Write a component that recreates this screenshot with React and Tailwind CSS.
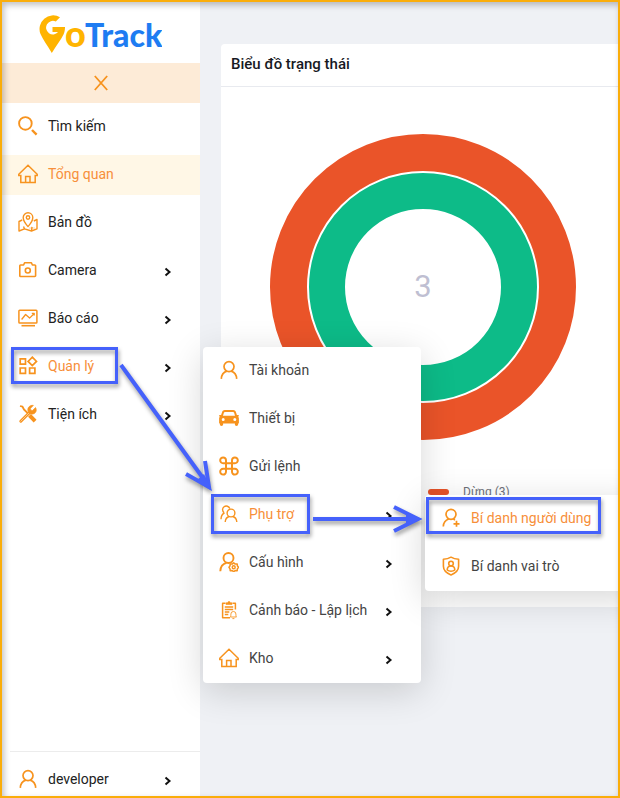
import React from "react";

const S = ({ children, sw = 1.5, className = "" }) => (
  <svg viewBox="0 0 20 20" className={"size-5 shrink-0 " + className} fill="none" stroke="#f7931e" strokeWidth={sw} strokeLinejoin="round" aria-hidden="true">
    {children}
  </svg>
);

const Search = () => <S sw={1.9}><circle cx="7.4" cy="7.4" r="6.3" /><path d="M14 14l4.600 4.600" strokeWidth="2.400" /></S>;
const Home = () => <S sw={1.5}><path d="M.8 10.3L10 1.2l9.2 9.1v1.2h-2v7.1H2.8v-7.1h-2zM7.6 18.6v-6h4.4v6" strokeLinejoin="miter" /></S>;
const MapPin = () => (
  <S sw={1.4}>
    <path d="M10 14.6S5.2 9.4 5.2 5.6a4.8 4.8 0 019.6 0c0 3.800-4.800 9-4.800 9z" />
    <circle cx="10" cy="5.500" r="1.700" />
    <path d="M4.200 8L1 9.500V19l5.500-2.200 7 2.200 5.500-2.200V7.500L15.800 9M5.500 14.500l1 2.300M14 14.800l-.5 4" />
    <path d="M11.500 16h5" strokeDasharray="1 1" strokeWidth=".8" />
  </S>
);
const Camera = () => <S sw={1.6}><path d="M2.600 5H5.600l1-2.300h6.800L14.400 5h2.400a.8.8 0 01.8.8v9.900a.8.8 0 01-.8.8H2.600a.8.8 0 01-.8-.8V5.800a.8.8 0 01.8-.8z" /><circle cx="9.800" cy="10.500" r="2.500" /></S>;
const Report = () => <S><rect x=".9" y="2.200" width="18" height="12.800" rx=".8" /><path d="M3.600 11.500l4-5 4 3.600 4.400-4.400M13.800 5.300h2.400v2.300" strokeWidth="1.300" /><path d="M3.500 17.700h13.500" strokeWidth="1.600" /></S>;
const Grid = () => <S sw={1.700}><path d="M2.200 2.800h5.300v5.300H2.200zM2.200 12h5.300v5.300H2.200zM11.600 12h5.300v5.300h-5.300zM14.300 1.200l4.200 4.200-4.200 4.200-4.200-4.200z" strokeLinejoin="miter" /></S>;
const Tools = () => (
  <S sw={1.500}>
    <path d="M2 2l2.500.7L6 5.500l5.200 5.200" strokeWidth="1.800" />
    <path d="M11.500 11.300l5.600 5.800" strokeWidth="4" strokeLinecap="butt" />
    <path d="M2.800 17.200l8-8" strokeWidth="3" strokeLinecap="round" />
    <path d="M2.500 17.500l9.300-9.300" stroke="#fff" strokeWidth=".5" />
    <path d="M17.500 3.500l-3 3-1.700-.3-.4-1.800 3-3C12 .8 9 3.600 10 7.200c.5 2.500 3.600 3.600 6 2.500 2.300-1.100 3-4 1.500-6.200z" fill="#f7931e" strokeWidth=".6" />
  </S>
);
const User = () => <S sw={1.700}><circle cx="10" cy="6.600" r="5" /><path d="M2.300 18.900c.2-4.200 2.500-6.800 5.500-7.800M17.700 18.900c-.2-4.200-2.500-6.800-5.500-7.800" /></S>;
const Car = () => (
  <S sw={0}>
    <path fill="#f7931e" fillRule="evenodd" d="M5.800 2h8.400c1.300 0 2.200.7 2.600 1.800L17.900 7h1.200c1.200 0 1 1.700 0 1.700.6.500.8 1.100.8 1.900v4.400c0 .4-.3.600-.8.600v1.200c0 1.500-3.200 1.500-3.200 0v-1.200H4.100v1.200c0 1.500-3.200 1.500-3.200 0v-1.200c-.5 0-.8-.2-.8-.6v-4.400c0-.8.2-1.400.8-1.900-1 0-1.200-1.700 0-1.700h1.200l1.100-3.200C3.600 2.700 4.500 2 5.800 2zm.2 1.900c-.6 0-.9.300-1.100.8L4 7.700h12l-.9-3c-.2-.5-.5-.8-1.100-.8zM4.200 10a1.500 1.500 0 100 3 1.500 1.500 0 000-3zm11.600 0a1.500 1.500 0 100 3 1.500 1.500 0 000-3z" />
  </S>
);
const Command = () => <S sw={2}><path d="M7 7V4.400A2.900 2.900 0 104.100 7.200h11.800A2.900 2.900 0 1013 4.400v11.200a2.900 2.900 0 102.900-2.800H4.100A2.900 2.900 0 107 15.600z" /></S>;
const Users = () => <S sw={1.400}><circle cx="12" cy="9" r="3.900" /><path d="M6.200 18c.2-3 1.800-4.900 4-5.500M17.800 18c-.2-3-1.800-4.900-4-5.500M10.800 4.600A3.700 3.700 0 105.200 8.800M2 15.200c.1-3.200 1.500-5.400 3.500-6.200" /></S>;
const UserGear = () => (
  <S sw={1.900}>
    <circle cx="9.500" cy="6" r="5" /><path d="M1.300 19.200c.2-4.700 2.700-7.500 6.200-8.300" />
    <path d="M14.700 10.800l1.500 1.300 2-.2.200 2 1.300 1.400-1.300 1.500-.2 2-2-.2-1.500 1.100-1.500-1.100-2 .2-.2-2-1-1.500 1-1.400.2-2 2 .2z" strokeWidth="1.500" /><circle cx="14.700" cy="15.300" r="1.500" strokeWidth="1.400" />
  </S>
);
const Clipboard = () => (
  <S sw={1.500}>
    <path d="M6.500 3.200H3.600v14.600H11M13.500 3.200h2.900v6.300" />
    <path d="M7 4.500V2.800h1.700a1.300 1.300 0 012.600 0H13v1.700z" fill="#f7931e" strokeWidth=".6" />
    <path d="M5.800 7h8.400M5.800 9.500h8.400M5.800 12h4.500M5.800 14.500h3.500" strokeWidth="1.300" />
    <path d="M11.300 17c.7-.6.500-1.800.6-3a2.500 2.500 0 015 0c.1 1.200-.1 2.400.6 3zM13.400 18.600h2" strokeWidth=".9" />
  </S>
);
const UserPlus = () => <S sw={1.700}><circle cx="10" cy="6.300" r="5" /><path d="M2.300 18.500c.2-4 2.500-6.600 5.500-7.500M12.300 11.100l1.700.8M15.500 12.800v6M12.500 15.800h6" /></S>;
const Shield = () => <S sw={1.600}><path d="M10 1.200c2.200 1.400 5 2 7.600 2v7c0 4-3.500 7-7.600 8.700-4.100-1.700-7.600-4.700-7.600-8.700v-7c2.600 0 5.400-.6 7.600-2z" /><circle cx="10" cy="7.500" r="2.300" /><path d="M6.200 14c0-2.500 1.500-4 3.800-4s3.800 1.500 3.800 4c-2 1.600-5.600 1.600-7.600 0z" /></S>;

const Chevron = () => (
  <svg viewBox="0 0 8 10" className="mt-1 h-2.5 w-2 shrink-0" fill="none" stroke="#111" strokeWidth="2" aria-hidden="true">
    <path d="M1.500 1.500L5.500 5l-4 3.500" />
  </svg>
);

function Item({ icon: Icon, label, active, arrow, className = "", tone = "text-[#222]" }) {
  return (
    <button type="button" className={"flex w-full cursor-pointer items-center text-left text-sm " + className + " " + (active ? "text-[#f78f3a]" : tone)}>
      <Icon />
      <span className="ml-2.5 flex-1 whitespace-nowrap">{label}</span>
      {arrow && <Chevron />}
    </button>
  );
}

const nav = [
  { icon: Search, label: "Tìm kiếm" },
  { icon: Home, label: "Tổng quan", active: true, selected: true },
  { icon: MapPin, label: "Bản đồ" },
  { icon: Camera, label: "Camera", arrow: true },
  { icon: Report, label: "Báo cáo", arrow: true },
  { icon: Grid, label: "Quản lý", arrow: true, active: true },
  { icon: Tools, label: "Tiện ích", arrow: true },
];

const manage = [
  { icon: User, label: "Tài khoản" },
  { icon: Car, label: "Thiết bị" },
  { icon: Command, label: "Gửi lệnh" },
  { icon: Users, label: "Phụ trợ", arrow: true, active: true },
  { icon: UserGear, label: "Cấu hình", arrow: true },
  { icon: Clipboard, label: "Cảnh báo - Lập lịch", arrow: true },
  { icon: Home, label: "Kho", arrow: true },
];

function Logo() {
  return (
    <svg viewBox="0 -8 124 56" className="h-14 w-[124px]" role="img" aria-label="GoTrack">
      <path d="M22 3.200A13.600 13.600 0 002.500 20c2.300 5 6.500 11 11.300 19 4.500-7.500 9-13 11.700-18.500.9-2 1.500-4 1.500-7.500H14.500v5h5.600a6.800 6.800 0 11-2.300-10.500z" fill="#ffb400" />
      <text x="27" y="33" fontFamily="Lato, sans-serif" fontWeight="900" fontSize="36" fill="#ffb400">o</text>
      <text x="47" y="33" fontFamily="Lato, sans-serif" fontWeight="900" fontSize="32" fill="#1e7cf2">Track</text>
    </svg>
  );
}

export default function App() {
  return (
    <div className="relative flex min-h-screen overflow-hidden bg-[#eff1f5] font-[Roboto,'Noto_Sans',sans-serif] text-sm">
      <aside className="flex w-[200px] shrink-0 flex-col bg-white">
        <div className="flex h-[63px] items-center justify-center pt-1">
          <Logo />
        </div>
        <button type="button" aria-label="Đóng" className="flex h-10 items-center justify-center bg-[#fdebd7] pl-0.5">
          <svg viewBox="0 0 14 16" className="h-4 w-3.5" fill="none" stroke="#f7931e" strokeWidth="1.800"><path d="M.8 1l12.400 14M13.200 1L.8 15" /></svg>
        </button>
        <nav className="mt-1 flex flex-col gap-2">
          {nav.map(({ selected, ...n }) => (
            <Item key={n.label} {...n} className={"h-10 pl-[18px] pr-7 pb-0.5 " + (selected ? "bg-[#fff7e6]" : "")} />
          ))}
        </nav>
        <div className="mt-auto ml-2.5 border-t border-[#ececec] pt-2">
          <Item icon={User} label="developer" arrow className="h-[38px] pl-2 pr-7" />
        </div>
      </aside>

      <main className="min-w-0 flex-1 pt-11 pl-[21px]">
        <section className="-mr-[5px] rounded bg-white pb-[105px]">
          <h2 className="flex h-[43px] items-center border-b border-[#e8eaef] px-2.5 text-[15px] font-medium text-[#17191f]">Biểu đồ trạng thái</h2>
          <svg viewBox="0 0 310 310" className="mx-auto mt-[45px] block size-[310px]" role="img" aria-label="3">
            <circle cx="155" cy="155" r="134.500" fill="none" stroke="#ea5429" strokeWidth="37" />
            <circle cx="155" cy="155" r="96" fill="none" stroke="#0dbb88" strokeWidth="36" />
            <text x="155" y="165" textAnchor="middle" fontSize="31" fill="#bfbfd2">3</text>
          </svg>
          <div className="mt-10 flex h-5 items-center pl-[207px] text-xs text-[#6e7079]">
            <span className="h-1.5 w-[21px] rounded-full bg-[#ea5429]" />
            <span className="ml-3.5">Dừng (3)</span>
          </div>
        </section>
      </main>

      <div className="absolute top-[347px] left-[203px] w-[218px] rounded-sm bg-white shadow-[0_8px_36px_rgba(0,0,0,0.16)]">
        {manage.map((m) => (
          <Item key={m.label} {...m} className="h-12 pl-4 pr-7 pb-0.5" tone="text-[#444]" />
        ))}
      </div>

      <div className="absolute top-[495px] left-[425px] w-[218px] rounded-sm bg-white shadow-[0_8px_36px_rgba(0,0,0,0.16)]">
        <Item icon={UserPlus} label="Bí danh người dùng" active className="h-12 pl-4 pb-0.5" />
        <Item icon={Shield} label="Bí danh vai trò" className="h-12 pl-4 pb-0.5" tone="text-[#444]" />
      </div>

      <div className="pointer-events-none absolute top-[347px] left-[11px] h-[37px] w-[107px] border-3 border-[#4561fb] drop-shadow-[1px_3px_2px_rgba(0,0,0,0.4)]" />
      <div className="pointer-events-none absolute top-[494px] left-[211px] h-10 w-[99px] border-3 border-[#4561fb] drop-shadow-[1px_3px_2px_rgba(0,0,0,0.4)]" />
      <div className="pointer-events-none absolute top-[497px] left-[426px] h-[37px] w-[175px] border-3 border-[#4561fb] drop-shadow-[1px_3px_2px_rgba(0,0,0,0.4)]" />
      <svg viewBox="0 0 320 190" className="pointer-events-none absolute top-[355px] left-[110px] h-[190px] w-[320px] drop-shadow-[1px_3px_2px_rgba(0,0,0,0.4)]" fill="none" stroke="#4561fb" strokeWidth="4" aria-hidden="true">
        <path d="M11 10L98 130M76 119l23 13-4-26" />
        <path d="M203 164h104M284 152l24 12-24 12" />
        <path d="M102 136l-16-10 8-7zM312 164l-16-7v14z" fill="#4561fb" stroke="none" />
      </svg>
      <div className="pointer-events-none absolute inset-0 border-2 border-[#faad0a] shadow-[inset_2px_3px_6px_rgba(0,0,0,0.25)]" />
    </div>
  );
}
